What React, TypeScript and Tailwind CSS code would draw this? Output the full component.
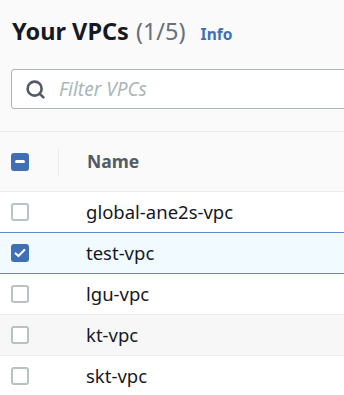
import { Search } from 'lucide-react';

const vpcs = [
  { name: 'global-ane2s-vpc', selected: false },
  { name: 'test-vpc', selected: true },
  { name: 'lgu-vpc', selected: false },
  { name: 'kt-vpc', selected: false, hover: true },
  { name: 'skt-vpc', selected: false },
];

function Checkbox({ checked }: { checked: boolean }) {
  if (checked) {
    return (
      <div className="w-[18px] h-[18px] rounded-[3px] bg-[#3f6fb5] flex items-center justify-center">
        <svg viewBox="0 0 16 16" className="w-[14px] h-[14px]">
          <path d="M3 8.5l3.2 3L13 4.5" fill="none" stroke="white" strokeWidth="2.4" strokeLinecap="round" strokeLinejoin="round" />
        </svg>
      </div>
    );
  }
  return <div className="w-[18px] h-[18px] rounded-[3px] border-2 border-[#b8c2c3] bg-white" />;
}

export default function App() {
  return (
    <div className="w-[344px] h-[395px] overflow-hidden bg-[#fafafa] font-['Noto_Sans',sans-serif]">
      {/* Header */}
      <div className="flex items-baseline pl-3 pt-[14px] h-[69px]">
        <h2 className="text-[23.5px] font-bold text-[#16191f]">Your VPCs</h2>
        <span className="ml-[7px] text-[23.5px] text-[#687078]">(1/5)</span>
        <span className="ml-[15px] text-[15.5px] font-bold text-[#3f6fb5]">Info</span>
      </div>

      {/* Filter */}
      <div className="pl-[11px] h-[62px]">
        <div className="h-[40px] w-[360px] border border-[#aab7b8] rounded-[3px] bg-white flex items-center pl-[13px]">
          <Search className="w-[21px] h-[21px] text-[#545b64]" strokeWidth={3} />
          <span className="ml-[13px] text-[19px] italic text-[#aab7b8]">Filter VPCs</span>
        </div>
      </div>

      {/* Table */}
      <div className="border-t border-[#eaeded]">
        <div className="h-[60px] flex items-center border-b border-[#eaeded]">
          <div className="w-[58px] pl-[11px] flex items-center">
            <div className="w-[18px] h-[18px] rounded-[3px] bg-[#3f6fb5] flex items-center justify-center">
              <div className="w-[10px] h-[3px] bg-white rounded-sm" />
            </div>
          </div>
          <div className="w-px h-[28px] bg-[#eaeded]" />
          <span className="ml-[28px] text-[17.5px] font-bold text-[#545b64]">Name</span>
        </div>
        {vpcs.map((v) => (
          <div
            key={v.name}
            className={`h-[41px] flex items-center ${
              v.selected
                ? 'bg-[#f1faff] border-y border-[#5a8bc9] h-[42px] -mt-px'
                : v.hover
                ? 'bg-[#f7f7f7] border-b border-[#eaeded]'
                : 'bg-white border-b border-[#eaeded]'
            }`}
          >
            <div className="w-[86px] pl-[11px] flex items-center">
              <Checkbox checked={v.selected} />
            </div>
            <span className="text-[18.5px] text-[#16191f]">{v.name}</span>
          </div>
        ))}
      </div>
    </div>
  );
}
